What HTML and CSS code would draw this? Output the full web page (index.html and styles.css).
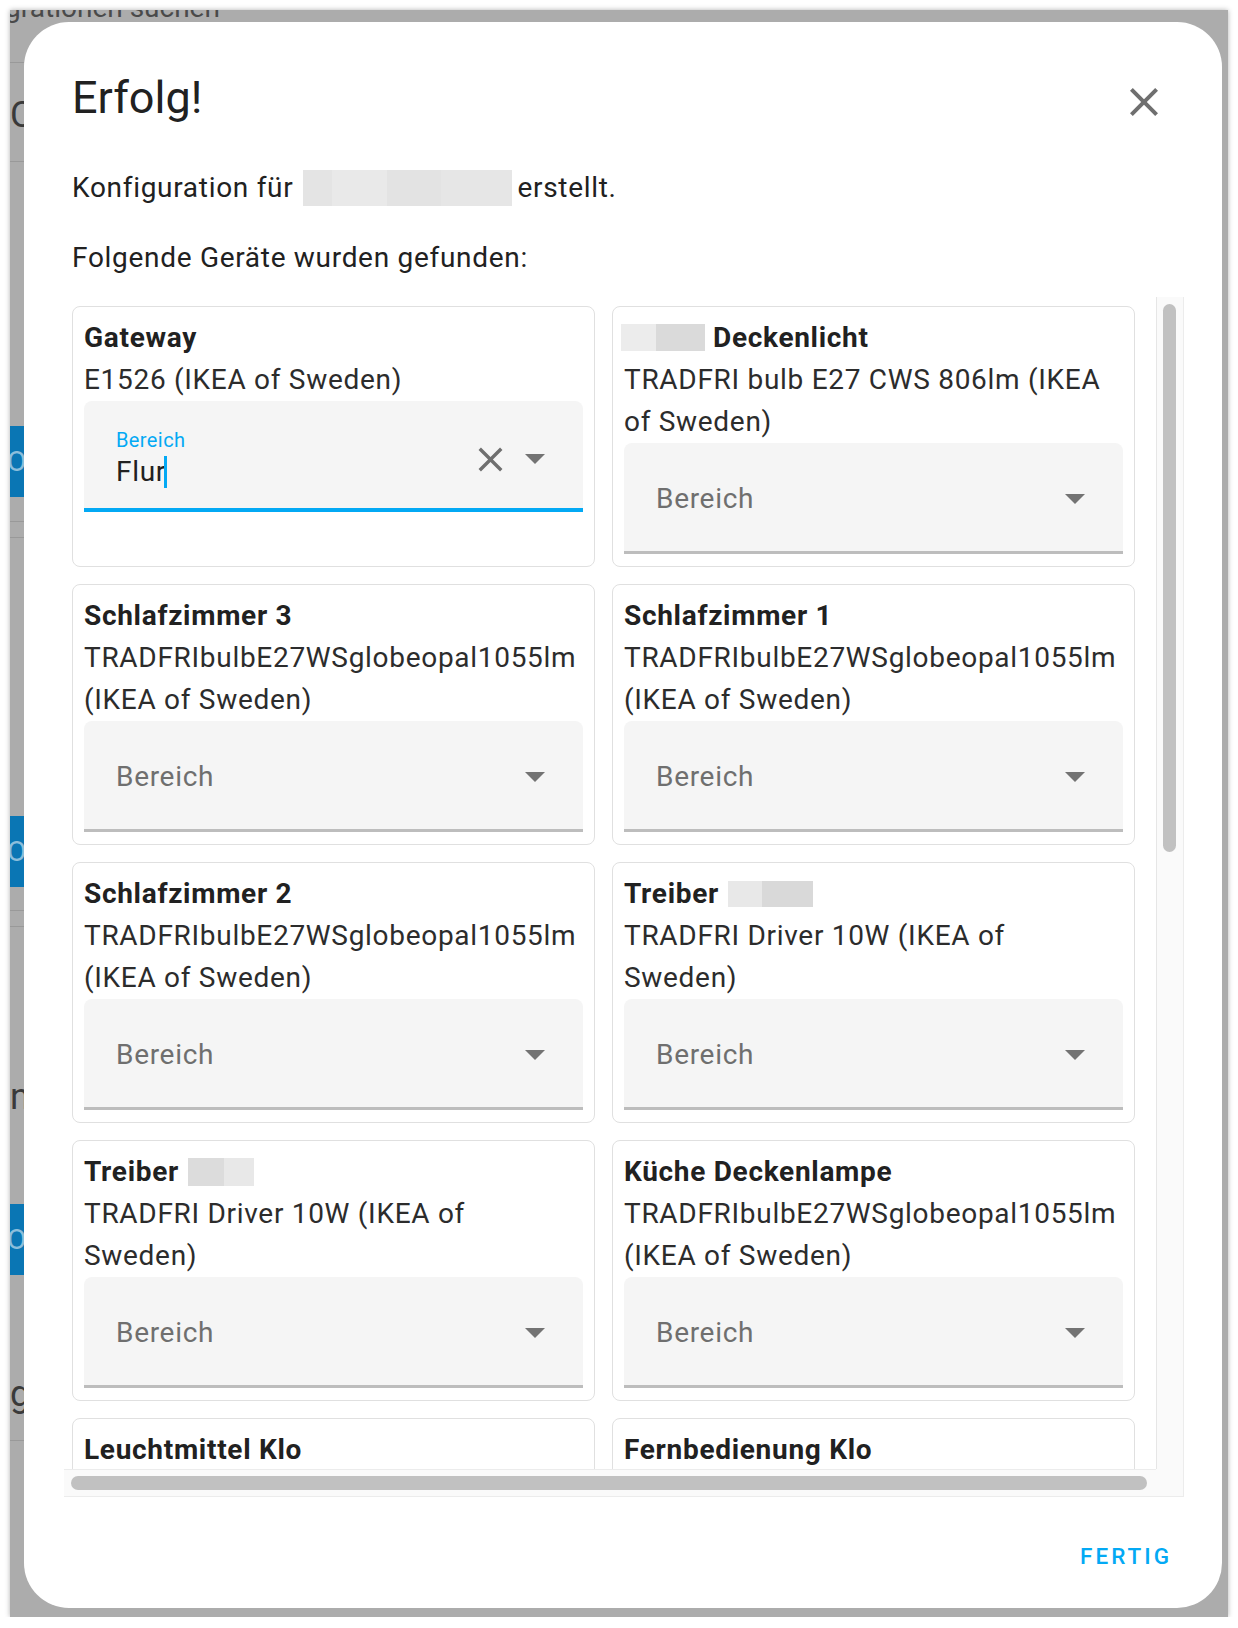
FILE: index.html
```html
<!DOCTYPE html>
<html lang="de">

<head>
	<meta charset="utf-8">
	<title>Erfolg!</title>
	<link rel="stylesheet" href="styles.css">
</head>

<body>
	<div class="window">
		<!-- page behind the dialog, only slivers of it are visible -->
		<div class="page">
			<div class="page-search">Integrationen suchen</div>
			<div class="page-rule rule-a"></div>
			<div class="page-letter letter-c">C</div>
			<div class="page-rule rule-b"></div>
			<div class="page-button button-a">O</div>
			<div class="page-rule rule-c"></div>
			<div class="page-rule rule-d"></div>
			<div class="page-button button-b">O</div>
			<div class="page-rule rule-e"></div>
			<div class="page-rule rule-f"></div>
			<div class="page-letter letter-n">n</div>
			<div class="page-button button-c">O</div>
			<div class="page-letter letter-g">g</div>
			<div class="page-rule rule-g"></div>
		</div>

		<div class="dialog">
			<div class="dialog-header">
				<h2 class="dialog-title">Erfolg!</h2>
				<svg class="dialog-close" viewBox="0 0 24 24">
					<path d="M19 6.41L17.59 5 12 10.59 6.41 5 5 6.41 10.59 12 5 17.59 6.41 19 12 13.41 17.59 19 19 17.59 13.41 12z" />
				</svg>
			</div>
			<p class="dialog-text text-config">Konfiguration für<span class="redacted redacted-entry"></span>erstellt.</p>
			<p class="dialog-text text-found">Folgende Geräte wurden gefunden:</p>

			<div class="devices">
				<div class="devices-view">
					<div class="device-grid">
						<div class="device">
							<div class="device-name">Gateway</div>
							<div class="device-model">E1526 (IKEA of Sweden)</div>
							<div class="area area-focused">
								<div class="area-content">
									<div class="area-float">Bereich</div>
									<div class="area-value">Flur<span class="caret"></span></div>
								</div>
								<svg class="area-clear" viewBox="0 0 24 24">
									<path d="M19 6.41L17.59 5 12 10.59 6.41 5 5 6.41 10.59 12 5 17.59 6.41 19 12 13.41 17.59 19 19 17.59 13.41 12z" />
								</svg>
								<svg class="area-arrow" viewBox="7 10 10 5"><path d="M7 10l5 5 5-5z" /></svg>
							</div>
						</div>
						<div class="device">
							<div class="device-name"><span class="redacted redacted-light"></span>Deckenlicht</div>
							<div class="device-model">TRADFRI bulb E27 CWS 806lm (IKEA of Sweden)</div>
							<div class="area">
								<span class="area-label">Bereich</span>
								<svg class="area-arrow" viewBox="7 10 10 5"><path d="M7 10l5 5 5-5z" /></svg>
							</div>
						</div>
						<div class="device">
							<div class="device-name">Schlafzimmer 3</div>
							<div class="device-model">TRADFRIbulbE27WSglobeopal1055lm (IKEA of Sweden)</div>
							<div class="area">
								<span class="area-label">Bereich</span>
								<svg class="area-arrow" viewBox="7 10 10 5"><path d="M7 10l5 5 5-5z" /></svg>
							</div>
						</div>
						<div class="device">
							<div class="device-name">Schlafzimmer 1</div>
							<div class="device-model">TRADFRIbulbE27WSglobeopal1055lm (IKEA of Sweden)</div>
							<div class="area">
								<span class="area-label">Bereich</span>
								<svg class="area-arrow" viewBox="7 10 10 5"><path d="M7 10l5 5 5-5z" /></svg>
							</div>
						</div>
						<div class="device">
							<div class="device-name">Schlafzimmer 2</div>
							<div class="device-model">TRADFRIbulbE27WSglobeopal1055lm (IKEA of Sweden)</div>
							<div class="area">
								<span class="area-label">Bereich</span>
								<svg class="area-arrow" viewBox="7 10 10 5"><path d="M7 10l5 5 5-5z" /></svg>
							</div>
						</div>
						<div class="device">
							<div class="device-name">Treiber<span class="redacted redacted-driver"></span></div>
							<div class="device-model">TRADFRI Driver 10W (IKEA of Sweden)</div>
							<div class="area">
								<span class="area-label">Bereich</span>
								<svg class="area-arrow" viewBox="7 10 10 5"><path d="M7 10l5 5 5-5z" /></svg>
							</div>
						</div>
						<div class="device">
							<div class="device-name">Treiber<span class="redacted redacted-short"></span></div>
							<div class="device-model">TRADFRI Driver 10W (IKEA of Sweden)</div>
							<div class="area">
								<span class="area-label">Bereich</span>
								<svg class="area-arrow" viewBox="7 10 10 5"><path d="M7 10l5 5 5-5z" /></svg>
							</div>
						</div>
						<div class="device">
							<div class="device-name">Küche Deckenlampe</div>
							<div class="device-model">TRADFRIbulbE27WSglobeopal1055lm (IKEA of Sweden)</div>
							<div class="area">
								<span class="area-label">Bereich</span>
								<svg class="area-arrow" viewBox="7 10 10 5"><path d="M7 10l5 5 5-5z" /></svg>
							</div>
						</div>
						<div class="device">
							<div class="device-name">Leuchtmittel Klo</div>
							<div class="device-model">TRADFRI bulb E14 WS opal 400lm (IKEA of Sweden)</div>
							<div class="area">
								<span class="area-label">Bereich</span>
								<svg class="area-arrow" viewBox="7 10 10 5"><path d="M7 10l5 5 5-5z" /></svg>
							</div>
						</div>
						<div class="device">
							<div class="device-name">Fernbedienung Klo</div>
							<div class="device-model">TRADFRI remote control (IKEA of Sweden)</div>
							<div class="area">
								<span class="area-label">Bereich</span>
								<svg class="area-arrow" viewBox="7 10 10 5"><path d="M7 10l5 5 5-5z" /></svg>
							</div>
						</div>
					</div>
				</div>
				<div class="scrollbar scrollbar-v"><div class="thumb"></div></div>
				<div class="scrollbar scrollbar-h"><div class="thumb"></div></div>
				<div class="scrollbar-corner"></div>
			</div>

			<div class="dialog-actions">
				<button class="action">Fertig</button>
			</div>
		</div>
	</div>
</body>

</html>
```

FILE: styles.css
```css
html,
body {
	margin: 0px;
	padding: 0px;
	background-color: #fff;
	font-family: Roboto, "Liberation Sans", sans-serif;
}

.window {
	position: relative;
	margin: 10px 10px 0px 10px;
	width: 1218px;
	height: 1607px;
	overflow: hidden;
	background-color: #acacac;
	box-shadow: 0px 0px 5px rgba(0, 0, 0, 0.3);
}

/* dimmed page behind */
.page {
	display: flex;
	flex-direction: column;
	align-items: flex-start;
	color: #3a3a3a;
}

.page-search {
	margin: -16px 0px 0px -52px;
	height: 28px;
	font-size: 28px;
	line-height: 28px;
	color: #4a4a4a;
	white-space: nowrap;
}

.page-rule {
	width: 14px;
	height: 1px;
	background-color: #999;
}

.page-letter {
	height: 40px;
	font-size: 36px;
	line-height: 40px;
}

.page-button {
	width: 14px;
	height: 71px;
	overflow: hidden;
	background-color: #0a76b4;
	color: rgba(255, 255, 255, 0.55);
	font-size: 28px;
	line-height: 71px;
	text-indent: -3px;
}

.rule-a { margin-top: 40px; }
.letter-c { margin-top: 32px; }
.rule-b { margin-top: 26px; }
.button-a { margin-top: 264px; }
.rule-c { margin-top: 24px; }
.rule-d { margin-top: 15px; }
.button-b { margin-top: 278px; }
.rule-e { margin-top: 23px; }
.rule-f { margin-top: 15px; }
.letter-n { margin-top: 150px; }
.button-c { margin-top: 87px; }
.letter-g { margin-top: 99px; }
.rule-g { margin-top: 26px; }

/* dialog */
.dialog {
	position: absolute;
	left: 14px;
	top: 12px;
	display: flex;
	flex-direction: column;
	width: 1198px;
	height: 1586px;
	padding: 0px 38px 0px 40px;
	box-sizing: border-box;
	border-radius: 45px;
	background-color: #fff;
	color: #212121;
}

.dialog-header {
	display: flex;
	justify-content: space-between;
	margin-top: 49px;
	padding-left: 8px;
}

.dialog-title {
	margin: 0px;
	font-size: 45px;
	font-weight: 400;
	line-height: 54px;
}

.dialog-close {
	margin-top: 7px;
	margin-right: 16px;
	width: 48px;
	height: 48px;
	fill: #6f6f6f;
}

.dialog-text {
	margin: 0px;
	padding-left: 8px;
	font-size: 28px;
	line-height: 42px;
	letter-spacing: 0.7px;
}

.text-config {
	margin-top: 41px;
}

.text-found {
	margin-top: 28px;
}

.redacted {
	display: inline-block;
	vertical-align: middle;
}

.redacted-entry {
	margin: -4px 5px 0px 10px;
	width: 209px;
	height: 36px;
	background: linear-gradient(90deg, #e4e4e4 0 14%, #e9e9e9 14% 40%, #e3e3e3 40% 66%, #e6e6e6 66%);
}

.redacted-light {
	margin: -4px 8px 0px -3px;
	width: 84px;
	height: 27px;
	background: linear-gradient(90deg, #ececec 0 42%, #dadada 42%);
}

.redacted-driver {
	margin: -4px 0px 0px 9px;
	width: 85px;
	height: 26px;
	background: linear-gradient(90deg, #e8e8e8 0 40%, #d9d9d9 40%);
}

.redacted-short {
	margin: -4px 0px 0px 9px;
	width: 66px;
	height: 28px;
	background: linear-gradient(90deg, #dcdcdc 0 55%, #e8e8e8 55%);
}

/* device list with its scrollbars */
.devices {
	display: grid;
	grid-template-columns: 1fr 28px;
	grid-template-rows: 1fr 28px;
	margin-top: 18px;
	height: 1200px;
	flex-shrink: 0;
}

.devices-view {
	overflow: hidden;
}

.scrollbar {
	display: flex;
	padding: 7px;
	box-sizing: border-box;
	background-color: #fafafa;
}

.scrollbar .thumb {
	border-radius: 8px;
	background-color: #c1c1c1;
}

.scrollbar-v {
	border-left: 1px solid #e6e6e6;
	border-right: 1px solid #ececec;
	padding-left: 6px;
}

.scrollbar-v .thumb {
	width: 15px;
	height: 548px;
}

.scrollbar-h {
	border-top: 1px solid #ececec;
	border-bottom: 1px solid #ececec;
	padding-top: 6px;
	padding-bottom: 6px;
}

.scrollbar-h .thumb {
	width: 1076px;
	height: 14px;
}

.scrollbar-corner {
	border-right: 1px solid #ececec;
	border-bottom: 1px solid #ececec;
	background-color: #fafafa;
}

.device-grid {
	display: grid;
	grid-template-columns: 523px 523px;
	gap: 17px 17px;
	padding: 9px 0px 0px 8px;
}

.device {
	display: flex;
	flex-direction: column;
	padding: 10px 11px 12px 11px;
	border: 1px solid #e0e0e0;
	border-radius: 8px;
	font-size: 28px;
	line-height: 42px;
	letter-spacing: 0.7px;
}

.device-name {
	font-weight: 700;
	color: #212121;
	white-space: nowrap;
}

.device-model {
	color: #2c2c2c;
}

.area {
	display: flex;
	align-items: center;
	height: 111px;
	padding: 4px 38px 0px 32px;
	box-sizing: border-box;
	border-bottom: 3px solid #bdbdbd;
	border-radius: 8px 8px 0px 0px;
	background-color: #f5f5f5;
	flex-shrink: 0;
}

.area-label {
	flex: 1;
	color: #6f6f6f;
}

.area-arrow {
	width: 20px;
	height: 10px;
	fill: #737373;
}

.area-focused {
	padding-top: 9px;
	border-bottom: 4px solid #03a9f4;
}

.area-content {
	align-self: flex-start;
	flex: 1;
	margin-top: 18px;
}

.area-float {
	font-size: 20px;
	line-height: 24px;
	letter-spacing: 0.4px;
	color: #03a9f4;
}

.area-value {
	line-height: 40px;
	color: #212121;
}

.caret {
	display: inline-block;
	vertical-align: middle;
	margin-top: -4px;
	margin-left: -2px;
	width: 3px;
	height: 32px;
	background-color: #03a9f4;
}

.area-clear {
	margin-right: 14px;
	width: 41px;
	height: 41px;
	fill: #6f6f6f;
}

/* footer */
.dialog-actions {
	display: flex;
	justify-content: flex-end;
	margin-top: 41px;
}

.action {
	margin-right: 12px;
	padding: 0px;
	border: none;
	background: none;
	font-family: Roboto, "Liberation Sans", sans-serif;
	font-size: 22.5px;
	font-weight: 500;
	line-height: 36px;
	letter-spacing: 3px;
	text-transform: uppercase;
	color: #03a9f4;
}
```
